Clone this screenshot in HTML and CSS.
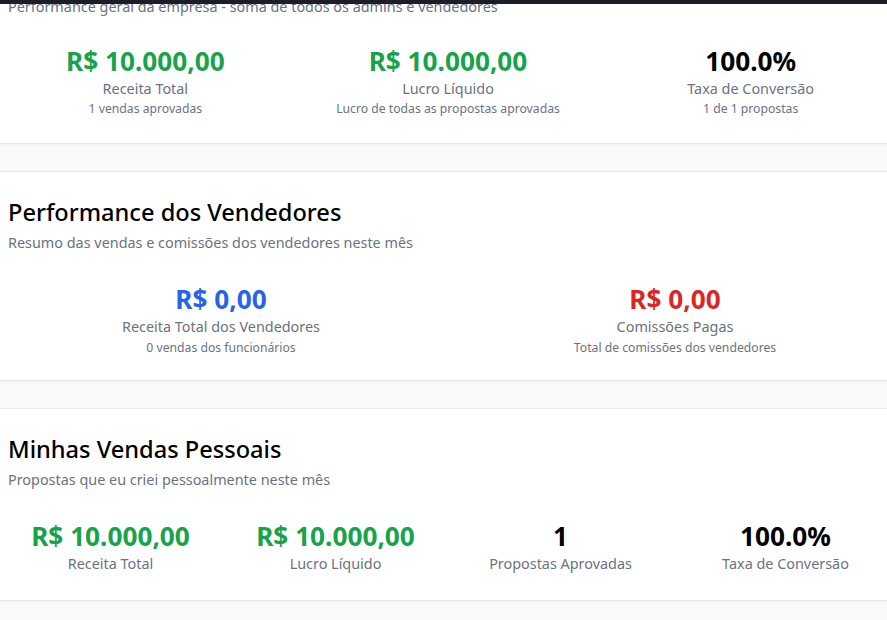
FILE: index.html
```html
<!DOCTYPE html>
<html lang="pt-BR">
<head>
<meta charset="utf-8">
<title>Dashboard</title>
<link rel="stylesheet" href="styles.css">
</head>
<body>
<div class="topbar"></div>
<main class="page">
  <section class="card card-first">
    <p class="card-sub">Performance geral da empresa - soma de todos os admins e vendedores</p>
    <div class="stats cols-3">
      <div class="stat">
        <div class="value green">R$ 10.000,00</div>
        <div class="label">Receita Total</div>
        <div class="sublabel">1 vendas aprovadas</div>
      </div>
      <div class="stat">
        <div class="value green">R$ 10.000,00</div>
        <div class="label">Lucro Líquido</div>
        <div class="sublabel">Lucro de todas as propostas aprovadas</div>
      </div>
      <div class="stat">
        <div class="value black">100.0%</div>
        <div class="label">Taxa de Conversão</div>
        <div class="sublabel">1 de 1 propostas</div>
      </div>
    </div>
  </section>

  <section class="card">
    <h2 class="card-title">Performance dos Vendedores</h2>
    <p class="card-sub">Resumo das vendas e comissões dos vendedores neste mês</p>
    <div class="stats cols-2">
      <div class="stat">
        <div class="value blue">R$ 0,00</div>
        <div class="label">Receita Total dos Vendedores</div>
        <div class="sublabel">0 vendas dos funcionários</div>
      </div>
      <div class="stat">
        <div class="value red">R$ 0,00</div>
        <div class="label">Comissões Pagas</div>
        <div class="sublabel">Total de comissões dos vendedores</div>
      </div>
    </div>
  </section>

  <section class="card card-last">
    <h2 class="card-title">Minhas Vendas Pessoais</h2>
    <p class="card-sub">Propostas que eu criei pessoalmente neste mês</p>
    <div class="stats cols-4">
      <div class="stat">
        <div class="value green">R$ 10.000,00</div>
        <div class="label">Receita Total</div>
      </div>
      <div class="stat">
        <div class="value green">R$ 10.000,00</div>
        <div class="label">Lucro Líquido</div>
      </div>
      <div class="stat">
        <div class="value black">1</div>
        <div class="label">Propostas Aprovadas</div>
      </div>
      <div class="stat">
        <div class="value black">100.0%</div>
        <div class="label">Taxa de Conversão</div>
      </div>
    </div>
  </section>
</main>
</body>
</html>
```

FILE: styles.css
```css
* { box-sizing: border-box; }
html, body {
  margin: 0;
  padding: 0;
  overflow: hidden;
}
body {
  background: #f8f9fb;
  font-family: "Noto Sans", "Open Sans", sans-serif;
  color: #000;
  width: 887px;
  height: 620px;
}
.topbar {
  position: fixed;
  top: 0;
  left: 0;
  right: 0;
  height: 4px;
  background: #1b1d27;
  z-index: 10;
}
.page {
  width: 900px;
  display: flex;
  flex-direction: column;
  gap: 27px;
  margin-top: -3px;
}
.card {
  background: #fff;
  border-top: 1px solid #e6e8ee;
  border-bottom: 1px solid #e3e6ec;
  padding: 24px 8px 24px;
  box-shadow: 0 1px 2px rgba(0,0,0,0.03);
}
.card-first {
  border-top: none;
  padding-top: 0;
  padding-bottom: 26px;
}
.card-last {
  padding-bottom: 26px;
}
.card-title {
  margin: 0;
  font-size: 23.6px;
  line-height: 32px;
  font-weight: 500;
  color: #000;
}
.card-sub {
  margin: 5px 0 0;
  font-size: 14.4px;
  line-height: 20px;
  color: #6b7280;
}
.card-first .card-sub { margin-top: 0; }
.stats {
  display: grid;
  margin: 30px 0 0 -2px;
  width: 884px;
}
.card-first .stats { margin-top: 28px; }
.cols-2 { grid-template-columns: repeat(2, 1fr); gap: 24px; }
.cols-3 { grid-template-columns: repeat(3, 1fr); gap: 24px; }
.cols-4 { grid-template-columns: repeat(4, 1fr); gap: 16px; }
.stat {
  display: flex;
  flex-direction: column;
  align-items: center;
  text-align: center;
}
.value {
  font-size: 26.2px;
  line-height: 32px;
  font-weight: 700;
}
.green { color: #16a34a; }
.blue { color: #2563eb; }
.red { color: #dc2626; }
.black { color: #000; }
.label {
  margin-top: 2px;
  font-size: 14.4px;
  line-height: 20px;
  color: #6b7280;
}
.sublabel {
  margin-top: 3px;
  font-size: 12.2px;
  line-height: 16px;
  color: #6b7280;
}
.card-first .sublabel { margin-top: 2px; }
```
